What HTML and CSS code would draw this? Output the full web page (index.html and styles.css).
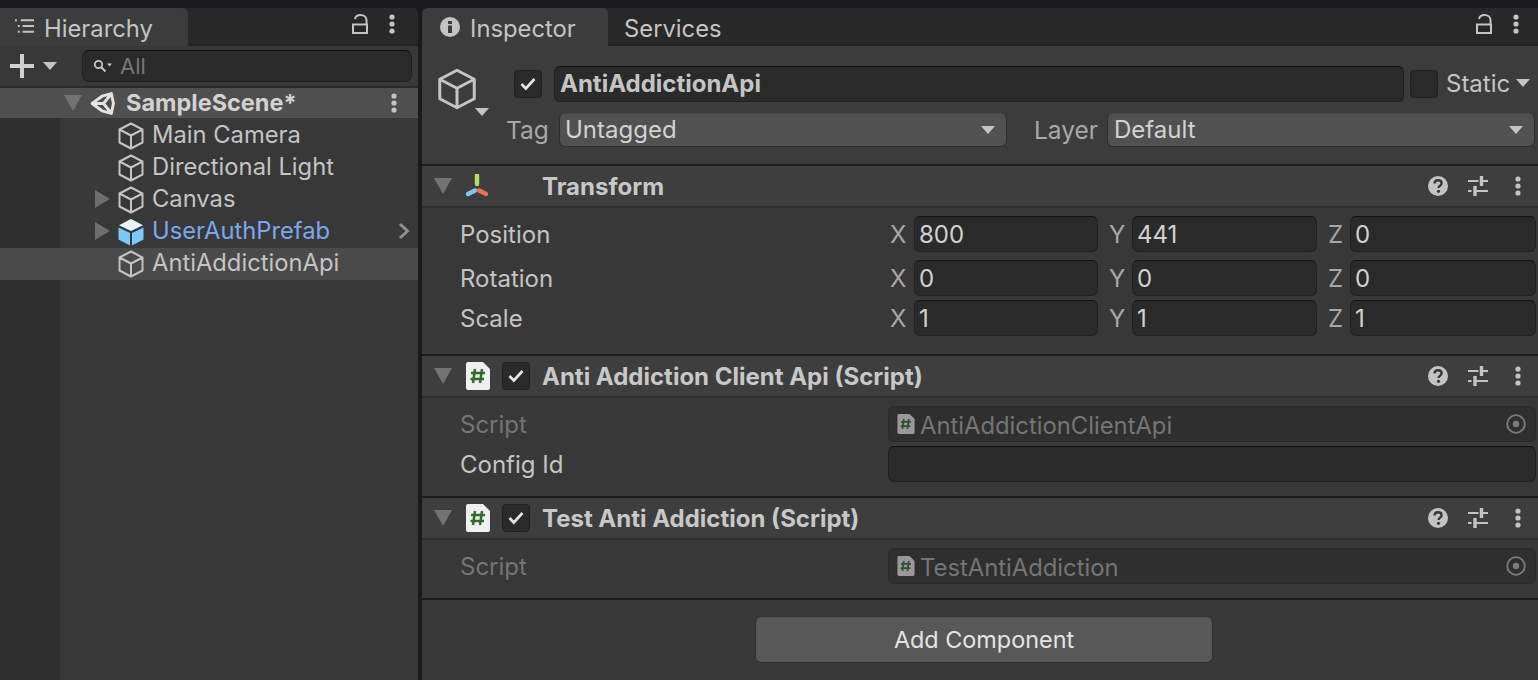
FILE: index.html
```html
<!DOCTYPE html>
<html lang="en">
<head>
<meta charset="utf-8">
<title>Unity Editor</title>
<link rel="stylesheet" href="styles.css">
</head>
<body>
<svg class="defs" width="0" height="0" aria-hidden="true">
  <symbol id="cube" viewBox="0 0 28 28"><path d="M14 1.500 25.500 7.500V20.500L14 26.500 2.500 20.500V7.500ZM2.500 7.500 14 13.500 25.500 7.500M14 13.500V26.500" fill="none" stroke="currentColor" stroke-width="2" stroke-linejoin="round"/></symbol>
  <symbol id="dots" viewBox="0 0 6 20"><circle cx="3" cy="3" r="2.600"/><circle cx="3" cy="10" r="2.600"/><circle cx="3" cy="17" r="2.600"/></symbol>
  <symbol id="lock" viewBox="0 0 16 20"><path d="M3 5C3.500 2.500 5.500 1 8.500 1S14.500 2.800 14.500 6V10M1 10.500H15V19H1Z" fill="none" stroke="currentColor" stroke-width="2"/></symbol>
  <symbol id="help" viewBox="0 0 20 20"><circle cx="10" cy="10" r="10" fill="#c4c4c4"/><path d="M6.500 7.500C6.600 5.400 8 4.300 10.100 4.300 12.200 4.300 13.600 5.500 13.600 7.200 13.600 9.600 10.600 9.600 10.600 12" fill="none" stroke="#383838" stroke-width="2.400"/><circle cx="10.500" cy="15.300" r="1.600" fill="#383838"/></symbol>
  <symbol id="sliders" viewBox="0 0 20 20"><path d="M0 5H10.500M15 5H20M0 15H3.500M8 15H20" stroke="#c4c4c4" stroke-width="2" fill="none"/><path d="M13.500 0V10M7 10V20" stroke="#c4c4c4" stroke-width="3.400" fill="none"/></symbol>
  <symbol id="check" viewBox="0 0 16 14"><path d="M1.500 7 5.800 11.500 14.500 2" fill="none" stroke="#e6e6e6" stroke-width="2.600"/></symbol>
  <symbol id="target" viewBox="0 0 20 20"><circle cx="10" cy="10" r="8.800" fill="none" stroke="currentColor" stroke-width="1.800"/><circle cx="10" cy="10" r="3.200" fill="currentColor"/></symbol>
  <symbol id="script" viewBox="0 0 24 28"><path d="M2 0H17L24 7V26A2 2 0 0 1 22 28H2A2 2 0 0 1 0 26V2A2 2 0 0 1 2 0Z" fill="#f0f0f0"/><path d="M9 7 7 21M16 7 14 21M5 11H19M4.500 17H18" stroke="#2f6b2f" stroke-width="2.500" fill="none"/></symbol>
</svg>

<main class="editor">
  <section class="panel hierarchy">
    <div class="tabbar">
      <div class="tab active">
        <svg class="tab-icon list" viewBox="0 0 22 16"><path d="M1 2H3M7 2H21M4 8H6M9 8H21M4 14H6M9 14H21" stroke="#c4c4c4" stroke-width="2" fill="none"/></svg>
        Hierarchy
      </div>
      <div class="tab-tools">
        <svg class="lock"><use href="#lock"/></svg>
        <svg class="dots"><use href="#dots"/></svg>
      </div>
    </div>
    <div class="h-toolbar">
      <svg class="plus" viewBox="0 0 24 24"><path d="M12 0V24M0 12H24" stroke="#d0d0d0" stroke-width="4"/></svg>
      <span class="caret caret-toolbar"></span>
      <div class="search">
        <svg class="search-icon" viewBox="0 0 20 14"><circle cx="5.500" cy="5.500" r="3.700" fill="none" stroke="#c4c4c4" stroke-width="1.800"/><path d="M8 8 12.500 12.500" stroke="#c4c4c4" stroke-width="2"/><path d="M14 4.500H19L16.500 7.500Z" fill="#c4c4c4"/></svg>
        <span>All</span>
      </div>
    </div>
    <div class="scene-row">
      <span class="tri-down scene-tri"></span>
      <svg class="unity" viewBox="0 0 24 24"><path d="M2 12 11.500 5 20.500 2.500 22.500 12 20.500 21.500 11.500 19ZM2 12H13M13 12 20.500 2.500M13 12 20.500 21.500" fill="none" stroke="#e4e4e4" stroke-width="2.800" stroke-linejoin="round"/></svg>
      <span class="scene-name">SampleScene*</span>
      <svg class="dots scene-dots"><use href="#dots"/></svg>
    </div>
    <div class="tree">
      <div class="gutter"></div>
      <ul class="rows">
        <li class="row"><span class="arrow-slot"></span><svg class="cube"><use href="#cube"/></svg><span>Main Camera</span></li>
        <li class="row"><span class="arrow-slot"></span><svg class="cube"><use href="#cube"/></svg><span>Directional Light</span></li>
        <li class="row"><span class="arrow-slot"><span class="tri-right"></span></span><svg class="cube"><use href="#cube"/></svg><span>Canvas</span></li>
        <li class="row prefab"><span class="arrow-slot"><span class="tri-right"></span></span>
          <svg class="cube" viewBox="0 0 28 28"><path d="M14 1 26 7.300 14 13 2 7.300Z" fill="#e8f6ff"/><path d="M1.500 9.500 13 15V27.500L1.500 21.500Z" fill="#7cc8fa"/><path d="M26.500 9.500 15 15V27.500L26.500 21.500Z" fill="#7cc8fa"/></svg>
          <span>UserAuthPrefab</span>
          <svg class="chevron" viewBox="0 0 12 18"><path d="M2 2 9.500 9 2 16" fill="none" stroke="#8f8f8f" stroke-width="3"/></svg>
        </li>
        <li class="row selected"><span class="arrow-slot"></span><svg class="cube"><use href="#cube"/></svg><span>AntiAddictionApi</span></li>
      </ul>
    </div>
  </section>

  <section class="panel inspector">
    <div class="tabbar">
      <div class="tab active">
        <svg class="tab-icon info" viewBox="0 0 20 20"><circle cx="10" cy="10" r="10" fill="#c4c4c4"/><rect x="8" y="8.500" width="4" height="7.500" fill="#3c3c3c"/><rect x="8" y="4" width="4" height="3" fill="#3c3c3c"/></svg>
        Inspector
      </div>
      <div class="tab">Services</div>
      <div class="tab-tools">
        <svg class="lock"><use href="#lock"/></svg>
        <svg class="dots"><use href="#dots"/></svg>
      </div>
    </div>

    <div class="go-header">
      <div class="go-icon">
        <svg class="go-cube"><use href="#cube"/></svg>
        <span class="caret go-caret"></span>
      </div>
      <div class="go-fields">
        <div class="go-line">
          <span class="checkbox"><svg><use href="#check"/></svg></span>
          <div class="name-field">AntiAddictionApi</div>
          <span class="checkbox"></span>
          <span class="static-label">Static</span>
          <span class="caret static-caret"></span>
        </div>
        <div class="go-line tag-line">
          <span class="tag-label">Tag</span>
          <div class="dropdown tag-drop">Untagged<span class="caret"></span></div>
          <span class="layer-label">Layer</span>
          <div class="dropdown layer-drop">Default<span class="caret"></span></div>
        </div>
      </div>
    </div>

    <article class="component">
      <header class="comp-header">
        <span class="tri-down"></span>
        <svg class="transform-icon" viewBox="0 0 26 24"><path d="M13 1.500V10" stroke="#b4e05c" stroke-width="4.400" stroke-linecap="round"/><path d="M4 20 11 16.500" stroke="#7cc8fa" stroke-width="4.400" stroke-linecap="round"/><path d="M22 20 15 16.500" stroke="#e8764a" stroke-width="4.400" stroke-linecap="round"/></svg>
        <span class="comp-title transform-title">Transform</span>
        <div class="comp-tools">
          <svg class="tool"><use href="#help"/></svg>
          <svg class="tool"><use href="#sliders"/></svg>
          <svg class="dots"><use href="#dots"/></svg>
        </div>
      </header>
      <div class="comp-body transform-body">
        <div class="vec-row">
          <span class="prop">Position</span>
          <div class="vec"><span class="axis">X</span><div class="field">800</div><span class="axis">Y</span><div class="field">441</div><span class="axis">Z</span><div class="field">0</div></div>
        </div>
        <div class="vec-row">
          <span class="prop">Rotation</span>
          <div class="vec"><span class="axis">X</span><div class="field">0</div><span class="axis">Y</span><div class="field">0</div><span class="axis">Z</span><div class="field">0</div></div>
        </div>
        <div class="vec-row scale-row">
          <span class="prop">Scale</span>
          <div class="vec"><span class="axis">X</span><div class="field">1</div><span class="axis">Y</span><div class="field">1</div><span class="axis">Z</span><div class="field">1</div></div>
        </div>
      </div>
    </article>

    <article class="component">
      <header class="comp-header">
        <span class="tri-down"></span>
        <svg class="script-icon"><use href="#script"/></svg>
        <span class="checkbox"><svg><use href="#check"/></svg></span>
        <span class="comp-title">Anti Addiction Client Api (Script)</span>
        <div class="comp-tools">
          <svg class="tool"><use href="#help"/></svg>
          <svg class="tool"><use href="#sliders"/></svg>
          <svg class="dots"><use href="#dots"/></svg>
        </div>
      </header>
      <div class="comp-body script-body">
        <div class="prop-row">
          <span class="prop dim">Script</span>
          <div class="obj-field"><svg class="mini-script"><use href="#script"/></svg><span class="obj-name">AntiAddictionClientApi</span><svg class="target"><use href="#target"/></svg></div>
        </div>
        <div class="prop-row">
          <span class="prop">Config Id</span>
          <div class="text-field"></div>
        </div>
      </div>
    </article>

    <article class="component">
      <header class="comp-header">
        <span class="tri-down"></span>
        <svg class="script-icon"><use href="#script"/></svg>
        <span class="checkbox"><svg><use href="#check"/></svg></span>
        <span class="comp-title">Test Anti Addiction (Script)</span>
        <div class="comp-tools">
          <svg class="tool"><use href="#help"/></svg>
          <svg class="tool"><use href="#sliders"/></svg>
          <svg class="dots"><use href="#dots"/></svg>
        </div>
      </header>
      <div class="comp-body script-body">
        <div class="prop-row">
          <span class="prop dim">Script</span>
          <div class="obj-field"><svg class="mini-script"><use href="#script"/></svg><span class="obj-name">TestAntiAddiction</span><svg class="target"><use href="#target"/></svg></div>
        </div>
      </div>
    </article>

    <div class="add-wrap"><button class="add-btn" type="button">Add Component</button></div>
  </section>
</main>
</body>
</html>
```

FILE: styles.css
```css
* { box-sizing: border-box; }
html, body { margin: 0; height: 100%; overflow: hidden; }
body {
  background: #191a1c;
  color: #c4c4c4;
  font-family: Inter, "Liberation Sans", sans-serif;
  font-size: 24px;
  line-height: 32px;
  padding-top: 8px;
}
.defs { position: absolute; }
ul { list-style: none; margin: 0; padding: 0; }
svg { display: block; flex: none; }
svg.dots { width: 6px; height: 20px; fill: #c4c4c4; }

.editor { display: flex; height: 672px; gap: 4px; background: #191a1c; }
.panel { background: #383838; display: flex; flex-direction: column; overflow: hidden; }
.hierarchy { width: 418px; border-top-right-radius: 6px; }
.inspector { flex: 1; border-top-left-radius: 6px; }

.tabbar {
  height: 38px;
  display: flex;
  flex: none;
  background: #282828;
  border-bottom: 2px solid #232323;
  font-size: 23.800px;
}
.tab {
  width: 188px;
  height: 38px;
  display: flex;
  align-items: center;
  gap: 9px;
  padding: 3px 0 0 14px;
  color: #c4c4c4;
  border-top-right-radius: 6px;
}
.tab.active { background: #3c3c3c; height: 38px; }
.tab-icon.list { width: 21px; height: 16px; margin-bottom: 5px; }
.inspector .tab { width: 186px; padding-left: 18px; gap: 10px; }
.inspector .tab + .tab { padding-left: 16px; }
.tab-icon.info { width: 20px; height: 20px; margin-bottom: 4px; }
.tab-tools { margin-left: auto; display: flex; align-items: center; gap: 21px; padding: 0 23px 5px 0; }
.inspector .tab-tools { padding-right: 19px; }
.lock { width: 16px; height: 20px; color: #c4c4c4; }

.h-toolbar {
  height: 42px;
  flex: none;
  display: flex;
  align-items: center;
  padding-left: 10px;
  border-bottom: 2px solid #2a2a2a;
}
.plus { width: 24px; height: 24px; }
.caret {
  display: block;
  flex: none;
  width: 0;
  height: 0;
  border-left: 7px solid transparent;
  border-right: 7px solid transparent;
  border-top: 8px solid #c4c4c4;
}
.caret-toolbar { margin-left: 9px; }
.search {
  width: 330px;
  height: 32px;
  margin-left: 25px;
  display: flex;
  align-items: center;
  gap: 7px;
  padding-left: 10px;
  background: #2a2a2a;
  border: 1px solid #202020;
  border-top-color: #111;
  border-radius: 7px;
  color: #777;
  font-size: 22px;
}
.search-icon { width: 20px; height: 14px; }

.scene-row {
  height: 30px;
  flex: none;
  display: flex;
  align-items: center;
  padding-left: 64px;
  background: #4f4f4f;
  font-weight: 700;
  color: #d2d2d2;
}
.tri-down {
  display: block;
  flex: none;
  width: 0;
  height: 0;
  border-left: 9px solid transparent;
  border-right: 9px solid transparent;
  border-top: 16px solid #737373;
}
.unity { width: 25px; height: 25px; margin-left: 8px; }
.scene-name { margin-left: 11px; font-size: 23.500px; }
.scene-dots { margin-left: auto; margin-right: 21px; }

.tree { flex: 1; display: flex; }
.gutter { width: 60px; background: #2f2f2f; flex: none; }
.rows { flex: 1; padding-top: 2px; }
.row {
  height: 32px;
  display: flex;
  align-items: center;
  color: #c4c4c4;
  font-size: 23.750px;
  padding-bottom: 2px;
}
.arrow-slot { width: 57px; display: flex; justify-content: flex-end; padding-right: 7px; }
.tri-right {
  width: 0;
  height: 0;
  border-top: 9px solid transparent;
  border-bottom: 9px solid transparent;
  border-left: 15px solid #6e6e6e;
}
.cube { width: 28px; height: 28px; margin-right: 7px; color: #c4c4c4; margin-top: 2px; }
.prefab { color: #7ba8ec; }
.chevron { width: 12px; height: 18px; margin-left: auto; margin-right: 8px; }
.selected { background: #4a4a4a; margin-left: -60px; padding-left: 60px; }

.go-header {
  height: 120px;
  flex: none;
  display: flex;
  background: #3c3c3c;
  border-bottom: 2px solid #1d1d1d;
}
.go-icon { width: 92px; flex: none; position: relative; }
.go-cube { width: 42px; height: 42px; color: #c4c4c4; margin: 22px 0 0 14px; }
.go-caret { position: absolute; left: 53px; top: 62px; }
.go-fields { flex: 1; display: flex; flex-direction: column; padding-top: 20px; min-width: 0; }
.go-line { display: flex; align-items: center; }
.checkbox {
  width: 28px;
  height: 28px;
  flex: none;
  display: flex;
  align-items: center;
  justify-content: center;
  background: #2a2a2a;
  border: 1px solid #202020;
  border-radius: 4px;
}
.checkbox svg { width: 16px; height: 14px; }
.name-field {
  width: 850px;
  height: 36px;
  margin-left: 12px;
  padding-left: 5px;
  background: #2a2a2a;
  border: 1px solid #212121;
  border-top-color: #111;
  border-radius: 6px;
  font-weight: 700;
  font-size: 24px;
  line-height: 34px;
}
.name-field + .checkbox { margin-left: 6px; }
.static-label { margin-left: 8px; font-size: 24px; }
.static-caret { margin-left: 6px; margin-bottom: 2px; }
.tag-line { margin-top: 11px; }
.tag-label { margin-left: -8px; width: 53px; color: #a8a8a8; font-size: 24.500px; }
.layer-label { margin-left: 27px; width: 73px; color: #a8a8a8; font-size: 24.500px; }
.dropdown {
  height: 34px;
  display: flex;
  align-items: center;
  justify-content: space-between;
  padding: 0 11px 0 6px;
  background: #515151;
  border: 1px solid #2e2e2e;
  border-top-color: #444;
  border-radius: 6px;
  color: #d2d2d2;
}
.tag-drop { width: 448px; padding-left: 5px; }
.layer-drop { width: 428px; }

.component { border-bottom: 2px solid #1d1d1d; flex: none; }
.comp-header {
  height: 42px;
  display: flex;
  align-items: center;
  padding-left: 12px;
  background: #3e3e3e;
  border-bottom: 2px solid #2d2d2d;
}
.transform-icon { width: 26px; height: 24px; margin-left: 12px; }
.comp-title { font-weight: 700; font-size: 24px; color: #c8c8c8; margin-left: 12px; padding-top: 2px; }
.transform-title { margin-left: 52px; }
.script-icon { width: 24px; height: 28px; margin-left: 14px; margin-right: 12px; }
.comp-tools { margin-left: auto; display: flex; align-items: center; gap: 20px; padding-right: 17px; }
.comp-tools .dots { margin-left: 7px; }
.tool { width: 20px; height: 20px; }

.comp-body { background: #383838; }
.transform-body { padding: 8px 2px 18px 38px; }
.script-body { padding: 8px 2px 14px 38px; }
.vec-row, .prop-row { display: flex; align-items: center; }
.vec-row { height: 36px; margin-bottom: 8px; }
.scale-row { margin-bottom: 0; margin-top: -4px; }
.prop { width: 428px; flex: none; color: #c4c4c4; padding-top: 2px; }
.dim { color: #757575; }
.vec { flex: 1; display: grid; grid-template-columns: 26px 184px 34px 185px 33px 186px; align-items: center; }
.axis { color: #a8a8a8; padding: 2px 0 0 2px; line-height: 32px; }
.axis:nth-child(3), .axis:nth-child(5) { padding-left: 11px; }
.field, .text-field {
  height: 36px;
  padding-left: 4px;
  background: #2a2a2a;
  border: 1px solid #212121;
  border-top-color: #111;
  border-radius: 6px;
  line-height: 36px;
  color: #d2d2d2;
}
.prop-row { height: 36px; margin-bottom: 4px; }
.prop-row:last-child { margin-bottom: 0; }
.text-field { flex: 1; }
.obj-field {
  flex: 1;
  height: 36px;
  display: flex;
  align-items: center;
  padding: 0 9px 0 8px;
  background: #2f2f2f;
  border: 1px solid #2a2a2a;
  border-radius: 6px;
  color: #757575;
  font-size: 23.800px;
}
.obj-name { padding-top: 4px; }
.mini-script { width: 18px; height: 20px; opacity: .55; margin-right: 5px; }
.target { width: 20px; height: 20px; margin-left: auto; color: #7c7c7c; }

.add-wrap { display: flex; justify-content: center; padding: 17px 0 0 8px; }
.add-btn {
  width: 458px;
  height: 46px;
  background: #585858;
  border: 1px solid #303030;
  border-top-color: #505050;
  border-radius: 6px;
  color: #e4e4e4;
  font-family: inherit;
  font-size: 23.400px;
  padding: 0 0 2px;
}
```
